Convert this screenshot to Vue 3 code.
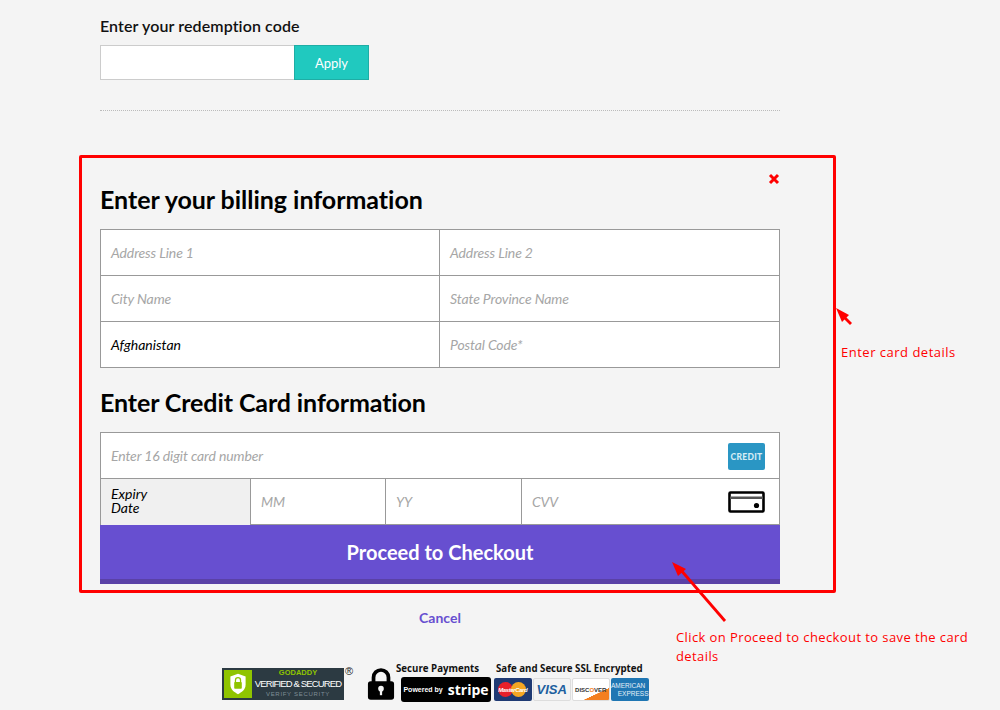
<script setup>
const billing = [
  ['Address Line 1', 'Address Line 2'],
  ['City Name', 'State Province Name'],
  ['Afghanistan', 'Postal Code*'],
]
</script>

<template>
  <div class="page">
    <main class="col">
      <h3 class="code-label">Enter your redemption code</h3>
      <div class="code-row">
        <div class="code-input"></div>
        <button class="apply">Apply</button>
      </div>
      <div class="dots"></div>

      <div class="close-row">
        <svg width="12" height="12" viewBox="0 0 12 12"><path d="M2 2 10 10M10 2 2 10" stroke="#f00" stroke-width="3" /></svg>
      </div>
      <h2 class="h1">Enter your billing information</h2>
      <div class="grid">
        <template v-for="(row, r) in billing" :key="r">
          <div v-for="(cell, c) in row" :key="c" class="cell" :class="{ ph: cell !== 'Afghanistan', bt: r > 0, bl: c > 0 }">{{ cell }}</div>
        </template>
      </div>
      <h2 class="h2">Enter Credit Card information</h2>
      <div class="card">
        <div class="card-num">
          <span class="ph">Enter 16 digit card number</span>
          <span class="credit">CREDIT</span>
        </div>
        <div class="card-exp">
          <div class="exp-label">Expiry<br />Date</div>
          <div class="exp ph mm">MM</div>
          <div class="exp ph yy">YY</div>
          <div class="exp ph cvv">
            <span>CVV</span>
            <svg width="37" height="22" viewBox="0 0 37 22"><rect x="1.500" y="1.500" width="34" height="19" rx="1" fill="#fff" stroke="#000" stroke-width="2.600" /><rect x="2" y="5.500" width="33" height="2.500" fill="#555" /><circle cx="28.500" cy="14.500" r="2.600" fill="#000" /></svg>
          </div>
        </div>
      </div>
      <button class="checkout">Proceed to Checkout</button>
      <a class="cancel">Cancel</a>

      <div class="trust">
        <div class="godaddy">
          <div class="gd-icon">
            <svg width="20" height="26" viewBox="0 0 20 26"><path d="M10 1 19 4V14C19 20 14 23 10 25 6 23 1 20 1 14V4Z" fill="#fff" /><rect x="5.500" y="10.500" width="9" height="8" rx="1" fill="#8fc400" /><path d="M7 11V8.500a3 3 0 0 1 6 0V11" fill="none" stroke="#8fc400" stroke-width="1.500" /></svg>
          </div>
          <div class="gd-text">
            <span class="gd-a">GODADDY</span>
            <span class="gd-b">VERIFIED &amp; SECURED</span>
            <span class="gd-c">VERIFY SECURITY</span>
          </div>
          <span class="reg">®</span>
        </div>
        <svg class="lock" width="28" height="34" viewBox="0 0 30 34"><path d="M7 16V10a8 8 0 0 1 16 0v6" fill="none" stroke="#000" stroke-width="4" /><rect x="1" y="14" width="28" height="20" rx="3" fill="#000" /><circle cx="15" cy="22" r="3" fill="#f4f4f4" /><rect x="13.800" y="23" width="2.400" height="6" fill="#f4f4f4" /></svg>
        <div class="pay">
          <div class="pay-title pay-left">Secure Payments</div>
          <div class="stripe"><span class="pw">Powered by</span><span class="st">stripe</span></div>
        </div>
        <div class="ssl">
          <div class="pay-title ssl-title">Safe and Secure SSL Encrypted</div>
          <div class="logos">
            <div class="logo mc">
              <i class="mc-r"></i><i class="mc-y"></i><span>MasterCard</span>
            </div>
            <div class="logo visa">VISA</div>
            <div class="logo disc"><span>DISC<b>O</b>VER</span></div>
            <div class="logo amex"><span>AMERICAN</span><span>EXPRESS</span></div>
          </div>
        </div>
      </div>
    </main>

    <!-- annotations drawn over the page -->
    <div class="redbox"></div>
    <svg class="arrows" width="1000" height="710" viewBox="0 0 1000 710">
      <path d="M851 324 841 314" stroke="#f00" stroke-width="2.800" />
      <path d="M836 308 849 315 842 322Z" fill="#f00" />
      <path d="M725 621 680 569" stroke="#f00" stroke-width="2.800" />
      <path d="M672 562 686 569 678 576Z" fill="#f00" />
    </svg>
    <div class="note n1">Enter card details</div>
    <div class="note n2">Click on Proceed to checkout to save the card details</div>
  </div>
</template>

<style>
html, body { margin: 0; background: #f4f4f4; }
</style>

<style scoped>
.page {
  position: relative;
  width: 1000px;
  height: 710px;
  overflow: hidden;
  background: #f4f4f4;
  font-family: Lato, "Liberation Sans", sans-serif;
  color: #000;
}
.col {
  width: 680px;
  margin-left: 100px;
  display: flex;
  flex-direction: column;
}
.code-label {
  margin: 16px 0 0;
  padding-bottom: 1px;
  font-size: 16px;
  line-height: 20px;
  font-weight: 600;
  letter-spacing: 0.1px;
  color: #111;
}
.code-row { display: flex; margin-top: 8px; height: 35px; }
.code-input {
  width: 194px;
  box-sizing: border-box;
  background: #fff;
  border: 1px solid #ccc;
  border-right: 0;
}
.apply {
  width: 75px;
  box-sizing: border-box;
  background: #20c9bf;
  border: 1px solid #1fada5;
  color: #fff;
  font: 400 13px Lato, sans-serif;
  padding: 0;
}
.dots { margin-top: 30px; border-top: 1px dotted #bbb; height: 0; }
.close-row {
  display: flex;
  justify-content: flex-end;
  height: 12px;
  margin-top: 62px;
}
.close-row svg { display: block; }
.h1, .h2 {
  margin: 0;
  font-size: 25px;
  line-height: 30px;
  font-weight: 700;
}
.h1 { margin-top: -1px; letter-spacing: -0.03px; }
.grid {
  margin-top: 15px;
  display: grid;
  grid-template-columns: 338px 340px;
  background: #fff;
  border: 1px solid #999;
  width: 680px;
  box-sizing: border-box;
}
.cell {
  height: 46px;
  box-sizing: border-box;
  display: flex;
  align-items: center;
  padding-left: 10px;
  font-size: 14px;
  font-style: italic;
}
.grid > .cell:nth-child(-n+2) { height: 45px; }
.bt { border-top: 1px solid #999; }
.bl { border-left: 1px solid #999; }
.ph { color: #a6a6a6; font-style: italic; letter-spacing: -0.12px; }
.h2 { margin-top: 19px; letter-spacing: -0.1px; }
.card {
  margin-top: 15px;
  background: #fff;
  border: 1px solid #999;
  border-bottom: 0;
  font-size: 14px;
}
.card-num {
  height: 45px;
  display: flex;
  align-items: center;
  justify-content: space-between;
  padding: 0 14px 0 10px;
  border-bottom: 1px solid #999;
}
.credit {
  width: 37px;
  height: 27px;
  margin-top: 2px;
  border-radius: 2px;
  background: #2a96c4;
  color: #d5ecf5;
  font-size: 8.500px;
  font-style: normal;
  font-weight: 900;
  letter-spacing: 0.3px;
  display: flex;
  align-items: center;
  justify-content: center;
}
.card-exp { display: flex; height: 46px; }
.exp-label {
  width: 150px;
  flex: none;
  box-sizing: border-box;
  background: #f0f0f0;
  padding: 8px 0 0 10px;
  line-height: 14px;
  font-style: italic;
  font-size: 14px;
  border-right: 1px solid #999;
}
.exp {
  box-sizing: border-box;
  padding-left: 10px;
  display: flex;
  align-items: center;
  border-right: 1px solid #999;
  border-bottom: 1px solid #999;
}
.mm { width: 135px; }
.yy { width: 136px; }
.cvv {
  flex: 1;
  justify-content: space-between;
  padding-right: 14px;
  border-right: 0;
}
.checkout {
  height: 59px;
  box-sizing: border-box;
  width: 680px;
  background: #674fd0;
  border: 0;
  border-bottom: 5px solid #5a41a6;
  color: #fff;
  font: 700 20px Lato, sans-serif;
  padding: 0 0 1px;
}
.cancel {
  margin-top: 25px;
  text-align: center;
  color: #674fd0;
  font-size: 14px;
  line-height: 18px;
  font-weight: 700;
}
.trust {
  margin-top: 34px;
  margin-left: 122px;
  display: flex;
  align-items: flex-start;
  height: 40px;
}
.godaddy {
  position: relative;
  margin-top: 7px;
  width: 122px;
  height: 32px;
  flex: none;
  background: #2c3a42;
  display: flex;
  padding-left: 2px;
  box-sizing: border-box;
}
.gd-icon {
  width: 28px;
  height: 28px;
  margin-top: 2px;
  flex: none;
  background: #8fc400;
  display: flex;
  align-items: center;
  justify-content: center;
}
.gd-icon svg { height: 22px; }
.gd-text {
  flex: 1;
  display: flex;
  flex-direction: column;
  align-items: center;
  font-family: "Liberation Sans", sans-serif;
  white-space: nowrap;
}
.gd-a { color: #8fc400; font-size: 7.500px; line-height: 8px; font-weight: 700; margin-top: 1px; }
.gd-b { color: #fff; font-size: 9.500px; line-height: 13px; letter-spacing: -0.85px; }
.gd-c { color: #7f8f98; font-size: 6px; line-height: 8px; letter-spacing: 0.7px; }
.reg {
  position: absolute;
  left: 123px;
  top: -3px;
  font: 11px "Liberation Sans", sans-serif;
  color: #222;
}
.lock { margin: 6px 0 0 23px; flex: none; }
.pay { margin-left: 6px; width: 90px; flex: none; }
.pay-title {
  font-family: "Open Sans", sans-serif;
  font-size: 9.700px;
  line-height: 13px;
  font-weight: 700;
  color: #111;
  white-space: nowrap;
  margin-top: 1px;
}
.pay-left { margin-left: -5px; }
.stripe {
  margin-top: 2px;
  height: 25px;
  border-radius: 3px;
  background: #000;
  color: #fff;
  display: flex;
  align-items: center;
  justify-content: center;
  gap: 5px;
}
.pw { font: 700 7px "Liberation Sans", sans-serif; }
.st { font: 700 14px "Open Sans", sans-serif; }
.ssl { margin-left: 3px; width: 155px; flex: none; }
.ssl-title { padding-left: 2px; }
.logos { display: flex; gap: 1.500px; margin-top: 3px; }
.logo {
  width: 37.500px;
  height: 23px;
  box-sizing: border-box;
  border-radius: 2px;
  position: relative;
  overflow: hidden;
  display: flex;
  align-items: center;
  justify-content: center;
  font-family: "Liberation Sans", sans-serif;
}
.mc { background: #1f3a73; }
.mc-r, .mc-y {
  position: absolute;
  top: 4px;
  width: 15px;
  height: 15px;
  border-radius: 50%;
}
.mc-r { left: 4px; background: #e8202a; }
.mc-y { left: 17px; background: #f5a623; }
.mc span {
  position: relative;
  color: #fff;
  font-size: 6px;
  font-style: italic;
  font-weight: 700;
  letter-spacing: -0.4px;
}
.visa {
  background: #f3f3f3;
  border: 1px solid #ddd;
  color: #1d5f9f;
  font-size: 13px;
  font-weight: 700;
  font-style: italic;
}
.disc {
  background: linear-gradient(155deg, #fff 68%, #f47f20 69%);
  border: 1px solid #ddd;
}
.disc span { font-size: 6px; font-weight: 700; color: #333; }
.disc b { color: #f47f20; }
.amex {
  background: #1f76b3;
  color: #e5f0f8;
  flex-direction: column;
  font-size: 6.500px;
  line-height: 8px;
}
.amex span:first-child { align-self: flex-start; }
.amex span:last-child { align-self: flex-end; }

.redbox {
  position: absolute;
  left: 79px;
  top: 155px;
  width: 757px;
  height: 438px;
  box-sizing: border-box;
  border: 3px solid #f00;
  border-radius: 2px;
  pointer-events: none;
}
.arrows { position: absolute; left: 0; top: 0; pointer-events: none; }
.note {
  position: absolute;
  color: #f00;
  font-family: "Open Sans", sans-serif;
  font-size: 13px;
  line-height: 19px;
  letter-spacing: 0.5px;
}
.n1 { left: 841px; top: 343px; white-space: nowrap; }
.n2 { left: 676px; top: 628px; width: 305px; letter-spacing: 0.4px; }
</style>
